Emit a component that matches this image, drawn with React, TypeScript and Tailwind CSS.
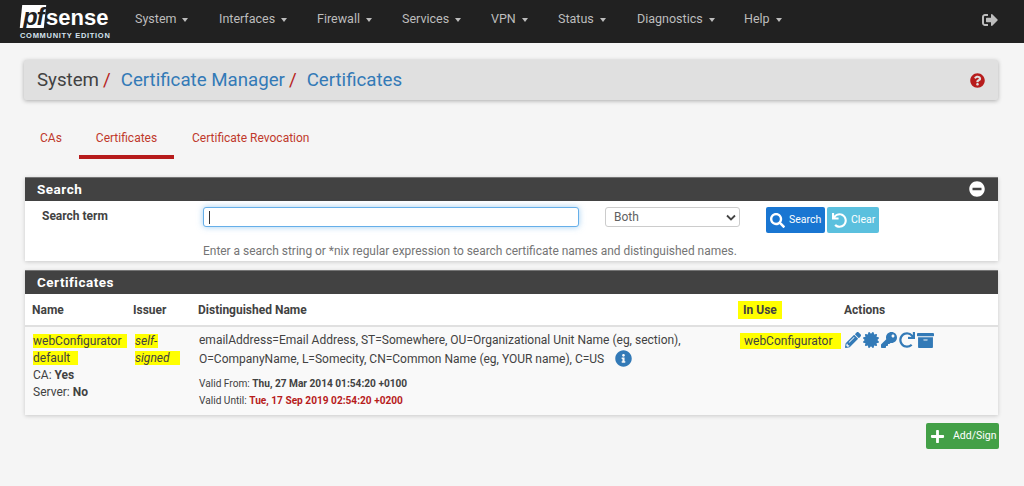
import React from 'react';
import {
  FaSignOutAlt, FaQuestionCircle, FaMinusCircle, FaSearch, FaUndo, FaInfoCircle,
  FaPencilAlt, FaCertificate, FaKey, FaRedo, FaArchive, FaPlus,
} from 'react-icons/fa';

const menus = [
  { label: 'System', cls: 'w-[84px]' },
  { label: 'Interfaces', cls: 'w-[98px]' },
  { label: 'Firewall', cls: 'w-[85px]' },
  { label: 'Services', cls: 'w-[89px]' },
  { label: 'VPN', cls: 'w-[67px]' },
  { label: 'Status', cls: 'w-[79px]' },
  { label: 'Diagnostics', cls: 'w-[107px]' },
  { label: 'Help', cls: 'w-[60px]' },
];

const Logo = () => (
  <div className="w-[90px] flex flex-col items-start pl-px">
    <div className="flex items-end h-[24px]">
      <div className="w-[24px] h-[23px] bg-white -skew-x-6 flex items-center justify-center">
        <span className="text-[#212121] text-[24px] leading-none font-bold italic skew-x-6 font-['Liberation_Sans',sans-serif] tracking-[-1px]">pf</span>
      </div>
      <span className="text-white text-[22px] leading-[21px] font-bold font-['Liberation_Sans',sans-serif] ml-px">sense</span>
    </div>
    <span className="-ml-px text-[#d5e3ee] text-[7.5px] leading-[9px] mt-[3px] font-bold tracking-[0.7px] whitespace-nowrap font-['Liberation_Sans',sans-serif]">COMMUNITY EDITION</span>
  </div>
);

const Panel = ({ title, action, children }: { title: string; action?: React.ReactNode; children: React.ReactNode }) => (
  <section className="ml-px bg-white shadow-[0_1px_4px_rgba(0,0,0,0.18)]">
    <div className="h-[24px] pb-[1px] bg-[#424242] px-[13px] flex items-center justify-between border-t border-[#757575]">
      <h2 className="-ml-px text-white text-[13.5px] font-bold tracking-[0.5px]">{title}</h2>
      {action}
    </div>
    {children}
  </section>
);

export default function App() {
  return (
    <div className="w-[1024px] h-[486px] overflow-hidden bg-[#f5f5f5] font-['Roboto',sans-serif] text-[#424242]">
      <nav className="h-[43px] bg-[#212121] flex items-center pl-[20px] pr-[26px]">
        <Logo />
        <ul className="flex ml-[25px] pb-[4px] text-[#bdbdbd] text-[12.5px]">
          {menus.map(m => (
            <li key={m.label} className={`${m.cls} flex items-center gap-[6px]`}>
              {m.label}
              <span className="w-0 h-0 border-x-[3.5px] border-x-transparent border-t-[4px] border-t-[#bdbdbd]" />
            </li>
          ))}
        </ul>
        <FaSignOutAlt className="ml-auto mb-[4px] text-[#bdbdbd]" size={16} />
      </nav>

      <main className="pl-[24px] pr-[26px]">
        <div className="mt-[17px] h-[40px] bg-[#e0e0e0] rounded-[2px] shadow-[0_1px_4px_rgba(0,0,0,0.3)] pl-[13px] pr-[13px] pt-[1px] flex items-center text-[18.7px]">
          <span>System</span>
          <span className="text-[#b71c1c] ml-[4px]">/</span>
          <span className="text-[#337ab7] ml-[10px]">Certificate Manager</span>
          <span className="text-[#b71c1c] ml-[4px]">/</span>
          <span className="text-[#337ab7] ml-[10px]">Certificates</span>
          <FaQuestionCircle className="ml-auto text-[#b71c1c]" size={15} />
        </div>

        <div className="mt-[20px] flex text-[#c0392b] text-[12px] h-[39px]">
          <a className="pl-[16px] w-[55px] pt-[9px]">CAs</a>
          <a className="w-[95px] flex justify-center pt-[9px] border-b-[4px] border-[#b71c1c]">Certificates</a>
          <a className="pl-[18px] pt-[9px]">Certificate Revocation</a>
        </div>

        <div className="mt-[18px]">
          <Panel title="Search" action={<FaMinusCircle className="text-white" size={16} />}>
            <div className="h-[60px] relative flex items-start text-[12px]">
              <label className="w-[178px] pl-[17px] pt-[6px] font-bold">Search term</label>
              <div className="w-[376px] mt-[6px] h-[20px] bg-white rounded-[3px] border border-[#66afe9] shadow-[0_0_6px_rgba(102,175,233,0.6)] flex items-center pl-[5px]">
                <span className="w-px h-[13px] bg-[#333]" />
              </div>
              <div className="ml-[26px] mt-[6px] w-[135px] h-[20px] rounded-[3px] border border-[#ccc] flex items-center justify-between pl-[8px] pr-[3px] text-[#616161] text-[12px]">
                Both
                <svg width="10" height="7" viewBox="0 0 10 7"><path d="M1 1.5l4 4 4-4" fill="none" stroke="#444" strokeWidth="1.8" /></svg>
              </div>
              <button className="ml-[26px] mt-[6px] w-[59px] h-[26px] bg-[#1976d2] rounded-[2px] text-white text-[10.5px] flex items-center pl-[4px] gap-[4px]">
                <FaSearch size={15} /> Search
              </button>
              <button className="ml-[2px] mt-[6px] w-[52px] h-[26px] bg-[#5bc0de] rounded-[2px] text-white text-[10.5px] flex items-center pl-[5px] gap-[4px]">
                <FaUndo size={15} /> Clear
              </button>
              <p className="absolute left-[178px] top-[42px] text-[#757575] text-[11.95px] whitespace-nowrap">
                Enter a search string or *nix regular expression to search certificate names and distinguished names.
              </p>
            </div>
          </Panel>
        </div>

        <div className="mt-[9px]">
          <Panel title="Certificates">
            <table className="w-full table-fixed text-[12px] border-collapse">
              <colgroup>
                <col className="w-[108px]" />
                <col className="w-[65px]" />
                <col className="w-[545px]" />
                <col className="w-[101px]" />
                <col />
              </colgroup>
              <thead>
                <tr className="h-[32px] border-b-2 border-[#e0e0e0] text-left font-bold">
                  <th className="pl-[7px]">Name</th>
                  <th>Issuer</th>
                  <th>Distinguished Name</th>
                  <th><span className="bg-[#ffff00] -ml-[5px] pl-[5px] pr-[5px] py-[2px]">In Use</span></th>
                  <th>Actions</th>
                </tr>
              </thead>
              <tbody>
                <tr className="h-[89px] bg-[#f9f9f9] align-top">
                  <td className="pl-[8px] pt-[6px] leading-[17px]">
                    <div><span className="bg-[#ffff00] pr-[6px]">webConfigurator</span></div>
                    <div><span className="bg-[#ffff00] pr-[8px]">default</span></div>
                    <div>CA: <b>Yes</b></div>
                    <div>Server: <b>No</b></div>
                  </td>
                  <td className="pl-[2px] pt-[6px] leading-[17px] italic">
                    <div><span className="bg-[#ffff00] pr-[1px]">self-</span></div>
                    <div><span className="bg-[#ffff00] pr-[10px]">signed</span></div>
                  </td>
                  <td className="pl-px pt-[4px]">
                    <div className="leading-[19px] h-[38px] w-[500px]">
                      emailAddress=Email Address, ST=Somewhere, OU=Organizational Unit Name (eg, section),
                      O=CompanyName, L=Somecity, CN=Common Name (eg, YOUR name), C=US
                      <FaInfoCircle className="inline ml-[11px] text-[#337ab7] -mt-[2px]" size={17} />
                    </div>
                    <div className="mt-[6px] text-[10.15px] leading-[17px]">
                      <div>Valid From: <b>Thu, 27 Mar 2014 01:54:20 +0100</b></div>
                      <div>Valid Until: <b className="text-[#b71c1c]">Tue, 17 Sep 2019 02:54:20 +0200</b></div>
                    </div>
                  </td>
                  <td className="pt-[6px] leading-[17px]">
                    <span className="bg-[#ffff00] -ml-[3px] pl-[4px] pr-[9px] py-px">webConfigurator</span>
                  </td>
                  <td className="pt-[5px]">
                    <div className="flex text-[#337ab7] gap-[2px] ml-px">
                      <FaPencilAlt size={16} />
                      <FaCertificate size={16} />
                      <FaKey size={16} />
                      <FaRedo size={16} />
                      <FaArchive size={17} />
                    </div>
                  </td>
                </tr>
              </tbody>
            </table>
          </Panel>
        </div>

        <div className="mt-[8px] -mr-px flex justify-end">
          <button className="w-[73px] h-[26px] bg-[#43a047] rounded-[2px] text-white text-[10.5px] flex items-center pl-[4px] gap-[8px]">
            <FaPlus size={15} /> Add/Sign
          </button>
        </div>
      </main>
    </div>
  );
}
